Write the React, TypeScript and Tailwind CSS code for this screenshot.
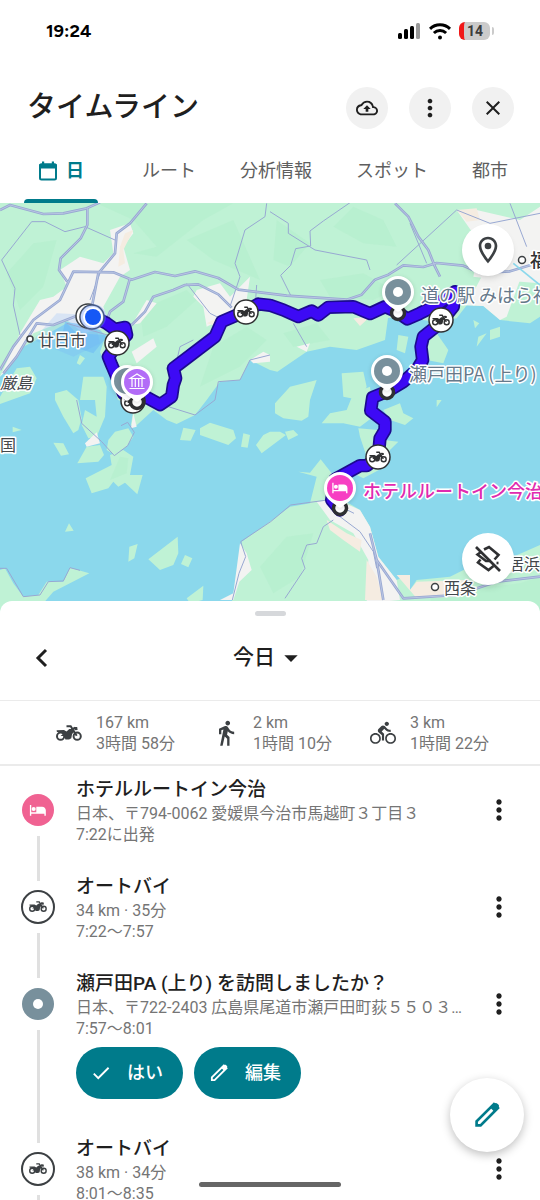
import type { ReactNode } from "react";
import {
  MdArrowDropDown,
  MdCheck,
  MdClose,
  MdDirectionsBike,
  MdDirectionsWalk,
  MdMoreVert,
  MdOutlineBackup,
  MdOutlineLocationOn,
} from "react-icons/md";

type IconProps = {
  className?: string;
};

function MotorcycleIcon({ className }: IconProps) {
  return (
    <svg viewBox="0 0 26 16" className={className} aria-hidden="true">
      <g fill="none" stroke="currentColor" strokeWidth="2">
        <circle cx="4.6" cy="11.2" r="3.6" />
        <circle cx="21.2" cy="11.2" r="3.6" />
        <path d="M10.5 1.2h4.2l6 9.6" />
        <path d="M15.6 4.6l3.6-1.9" />
      </g>
      <path
        fill="currentColor"
        d="M.6 5.2l7.4-.1 2.5 1.3 2.8-2.5h3l2.4 2.3-2.6 2.7-.8 4.3-2.2 1.2H9.4l-1.2-3.5L4.6 11l2.9-2.6L5 7.1.9 7zM18 1.9l3.2.2.4 2.8-3 .4z"
      />
    </svg>
  );
}

function EditIcon({ className }: IconProps) {
  return (
    <svg viewBox="0 0 24 24" className={className} aria-hidden="true">
      <path
        d="M4.2 19.8v-3L17.2 3.8l3 3-13 13z"
        fill="none"
        stroke="currentColor"
        strokeWidth="2"
      />
      <path d="M14.5 6.500l3-3c.7-.7 1.600-.7 2.300 0l.7.7c.7.7.7 1.600 0 2.300l-3 3z" fill="currentColor" />
    </svg>
  );
}

function BedIcon({ className }: IconProps) {
  return (
    <svg viewBox="0 0 20 14" fill="currentColor" className={className} aria-hidden="true">
      <path d="M1 1h1.5v8.2h5.6V3h6.4c2.4 0 4.2 1.8 4.2 4v6h-1.6v-2.2H2.5V13H1z" />
      <circle cx="5.2" cy="5.6" r="2.3" />
    </svg>
  );
}

function CalendarIcon({ className }: IconProps) {
  return (
    <svg viewBox="0 0 20 20" className={className} aria-hidden="true">
      <rect x="2" y="3.5" width="16" height="15" rx="1.5" fill="none" stroke="currentColor" strokeWidth="2" />
      <path d="M1 7.5v-3C1 3.2 1.8 2.400 3 2.400h1V.5h2.200v1.900h7.600V.5H16v1.900h1c1.200 0 2 .8 2 2.100v3z" fill="currentColor" />
    </svg>
  );
}

function LayersOffIcon({ className }: IconProps) {
  return (
    <svg
      viewBox="0 0 28 28"
      fill="none"
      stroke="currentColor"
      strokeWidth="2.600"
      className={className}
      aria-hidden="true"
    >
      <path d="M2 2l24 24" />
      <path d="M10 4.500L15 2l9.500 8-4 4.500" />
      <path d="M7 7L3.500 9.500 12 16h5" />
      <path d="M6.500 14.500L4 17.500l10.500 7.500 5-4" />
      <path d="M22.500 18h2" />
    </svg>
  );
}

function StatusBar() {
  return (
    <div className="flex h-[62px] shrink-0 items-center justify-between px-[46px] text-black">
      <span className="font-['Figtree','Open_Sans',sans-serif] text-lg font-bold">19:24</span>
      <div className="flex items-center gap-2">
        <svg width="24" height="18" viewBox="0 0 24 18" aria-hidden="true">
          <rect x="1" y="11" width="4" height="6" rx="1.5" />
          <rect x="7" y="7" width="4" height="10" rx="1.5" />
          <rect x="13" y="4" width="4" height="13" rx="1.5" />
          <rect x="19" y="1" width="4" height="16" rx="1.5" fill="#999" />
        </svg>
        <svg width="22" height="17" viewBox="0 0 22 17" fill="none" stroke="#000" strokeWidth="3" aria-hidden="true">
          <path d="M1 5.8a14.5 14.5 0 0 1 20 0" />
          <path d="M4.9 10a9 9 0 0 1 12.2 0" />
          <circle cx="11" cy="14.5" r="2" fill="#000" stroke="none" />
        </svg>
        <div className="flex items-center gap-0.5">
          <span className="flex h-[18px] w-[31px] items-center justify-center rounded-md border-l-[5px] border-[#f01818] bg-[#cbcbcb] pr-1 font-['Roboto',sans-serif] text-sm font-bold text-[#3c3c3c]">
            14
          </span>
          <span className="h-2 w-0.5 rounded-r bg-[#cbcbcb]" />
        </div>
      </div>
    </div>
  );
}

type RoundButtonProps = {
  label: string;
  children: ReactNode;
};

function RoundButton({ label, children }: RoundButtonProps) {
  return (
    <button
      aria-label={label}
      className="flex size-[42px] items-center justify-center rounded-full bg-[#f1f1f1] text-[#1f1f1f]"
    >
      {children}
    </button>
  );
}

const tabs = ["ルート", "分析情報", "スポット", "都市"];

function Header() {
  return (
    <header className="shrink-0">
      <div className="flex h-[92px] items-center justify-between pl-[27px] pr-[26px]">
        <h1 className="text-[29px] font-medium text-[#1f1f1f]">タイムライン</h1>
        <div className="flex gap-[21px]">
          <RoundButton label="バックアップ">
            <MdOutlineBackup className="size-[22px]" />
          </RoundButton>
          <RoundButton label="メニュー">
            <MdMoreVert className="size-7" />
          </RoundButton>
          <RoundButton label="閉じる">
            <MdClose className="size-6" />
          </RoundButton>
        </div>
      </div>
      <nav className="flex h-[49px] gap-11 overflow-hidden whitespace-nowrap pl-6 text-lg text-[#5e5e5e]">
        <button className="relative flex items-center gap-2 px-[14px] pb-4 font-bold text-[#007b8b]">
          <CalendarIcon className="size-5" />日
          <span className="absolute inset-x-0 bottom-0 h-1 rounded-t-sm bg-[#007b8b]" />
        </button>
        {tabs.map((tab) => (
          <button key={tab} className="pb-4">
            {tab}
          </button>
        ))}
      </nav>
    </header>
  );
}

// Terrain is digitised at three units per map pixel
const majorRoads = [
  "M0 30l30-15 100 27 60-2 70-15 40-18",
  "M262 25l0 50-20 40-60 60-5 35 25 35",
  "M0 510l40-70 60-80 80-60 40-85 120 2 55 22 70-23 60 12 60-14 70 20 60 35 145 18 180 12 45-15 40-45 40-15 45-28 60 5 40-12 80 8 50 22 90-5 60-18 90-30 110-15",
  "M440 10l-50 60-40 30-5 60-50 60-25 130",
  "M390 235l-20 70-40 30-15 40 30 25",
  "M10 520l40-50 60-100 50 5 90-35",
  "M395 375l40-40 25-45 60-20 35-15 40-2 60 30 40 40",
  "M1185 10l40 40 30 60 30 40 20 50 15 30",
  "M1110 1000l20 80 20 120M1130 1080l80 115 160-10 120-40 130-15",
];

const minorRoads = [
  "M5 180l40 85-5 50 20 90M5 180l90-115 40 0 60 30 60-15 90 40",
  "M800 10l-5 40-60 40-30 100 15 40-30 90",
  "M810 35l55 35 0 30 80 50 155 30 10 30",
  "M1050 8l-80 55-40 30 2 45-45 8-15 50-30 30 30 60",
  "M1190 195l180-165 100 40 150-30M1230 70l50 120M1530 10l50 130",
  "M270 300l30-80M200 370l140 40 50-20",
  "M525 505l15-65 40-20M560 250l70 90 60 30",
  "M880 370l40 70M770 255l-5 70",
  "M230 600l15 70 60 55 38 42 40-30 20-40-20-30-20 10",
  "M0 1105l20 0 50 85 50-5 25-40 45-2 20-40 30 8",
  "M505 620l80 25 60-45 10-55 65-5 30-60 60-15",
  "M697 1200l20-80 20-50-15-45 90-60 60-50 110-15 80 40",
  "M1000 960l-30 20-20 50-30 5-15 40 10 30-60 90",
  "M1020 950l60 45 40 60 10 50",
];

const land = [
  // mainland
  "M0 0H1620V350L1590 370 1500 360 1450 318 1400 316 1370 355 1300 365 1215 350 1164 354 1155 420 1070 450 990 440 920 455 832 515 810 510 750 480 720 540 660 545 620 600 585 645 530 672 500 660 460 630 405 680 393 675 402 615 354 600 330 525 300 456 318 405 230 400 200 370 110 420 70 440 50 470 20 500 0 530Z",
  "M165 600L165 580 200 570 235 600 245 655 235 690 220 700 190 650Z",
  "M240 600L250 530 310 530 320 560 318 600 315 650 290 710 265 715 245 675 255 630 290 650 285 600Z",
  "M325 720L345 695 385 685 400 710 380 740 345 765 320 750Z",
  "M232 790L260 740 300 735 312 765 295 785Z",
  "M330 765L370 750 400 770 390 825 428 825 412 883 375 848 355 860 340 845 325 865 275 880 257 835 335 795Z",
  "M160 728L190 730 207 763 183 767ZM38 680L65 690 38 697Z",
  "M550 683L587 690 572 722 540 720ZM600 685L630 668 700 690 708 715 685 735 600 705Z",
  "M730 700L750 705 743 743 723 740ZM768 735L790 705 810 695 840 695 858 705 785 760Z",
  "M195 995L207 970 221 992ZM388 1040L413 1032 403 1075 385 1085Z",
  "M445 1078L533 1010 535 1060 520 1095 480 1110ZM555 1065L577 1075 565 1102 543 1092Z",
  "M560 1195L610 1157 608 1200 570 1210Z",
  "M0 1110L15 1105 40 1150 70 1190 115 1185 140 1145 190 1145 210 1103 268 1120 160 1175 130 1210 0 1240Z",
  "M0 590L50 505 90 500 110 535 90 580 0 612ZM230 490L240 465 255 475 240 495Z",
  // Shikoku
  "M690 1240L700 1180 718 1110 725 1025 810 965 870 920 930 910 950 830 895 815 930 818 962 778 995 820 1030 900 1080 930 1110 980 1135 1070 1190 1140 1225 1125 1230 1170 1250 1140 1350 1130 1410 1100 1540 1070 1620 1035V1240Z",
  // Geiyo islands
  "M1075 685L1135 690 1150 720 1195 725 1170 750 1155 800 1090 835 1060 820 1100 770 1080 710Z",
  "M965 670L990 640 1040 630 1060 580 1110 560 1120 650 1080 680 1030 670Z",
  "M825 610L870 560 930 545 950 540 930 600 925 650 905 662 850 655 825 640Z",
  "M1150 630L1200 610 1210 640 1240 655 1215 675 1170 660ZM855 695L880 690 895 705 865 720Z",
  "M1195 405L1225 410 1215 460 1190 450ZM1025 520L1090 515 1100 560 1080 600 1030 590Z",
  "M1250 430L1310 400 1345 450 1330 490 1280 480ZM1420 360L1438 370 1425 385Z",
  "M1470 390L1500 380 1500 410 1470 420ZM1435 410L1460 400 1430 440ZM1310 600L1325 600 1310 622Z",
];

const hills = [
  "M290 10L400 60 470 140 400 160 470 170 610 60 700 10ZM560 120L640 180 780 240 700 60Z",
  "M20 220L100 130 170 120 130 260 60 330ZM420 330L560 270 590 300 500 380 430 410Z",
  "M1000 80L1060 20 1150 60 1190 140 1090 130ZM830 60L930 130 870 200 820 180Z",
  "M960 240L1090 220 1180 270 1120 300 990 290ZM850 400L950 370 990 420 880 440Z",
  "M640 440L740 380 800 420 720 500 600 560ZM860 1010L940 1000 900 1130 820 1180 780 1100Z",
  "M1290 1190L1400 1170 1560 1150 1620 1130V1240H1300ZM360 770L385 775 380 820 330 840Z",
];

const towns = [
  "M330 90L390 70 400 100 370 140 390 210 360 230 310 320 330 380 250 400 200 360 100 400 20 510 0 530 60 400 120 300 160 290 200 260 180 210 240 170 310 190 340 160Z",
  "M590 270L660 250 690 290 750 230 740 300 700 340 620 380 610 320 580 290Z",
  "M395 375L440 300 470 310 420 370ZM395 455L460 415 470 440 410 490Z",
  "M1370 30L1430 30 1560 60 1620 20V250L1500 240 1420 230 1440 130Z",
  "M1400 316L1450 220 1560 240 1520 350 1500 360 1450 318ZM255 730L290 697 300 730 260 740Z",
  "M950 905L1000 900 1035 910 1080 930 1110 980 1135 1070 1190 1140 1200 1200 1100 1210 1105 1080 1060 1000 990 960Z",
  "M720 1030L740 1060 755 1110 718 1145 700 1200 660 1200 700 1180ZM400 640L410 680 393 685ZM890 440L930 430 920 455Z",
  "M750 480L790 455 810 465 810 485 760 490Z",
];

const route =
  "M280 350L320 370 345 388 375 382 380 405 355 430 325 470 335 495 350 530 370 580 400 600 440 592 480 614 515 590 520 555 527 535 520 505 645 410 665 365 735 335 775 312 810 316 850 330 895 350 935 333 955 345 985 322 1060 320 1110 341 1155 320 1190 335 1222 357 1260 340 1310 315 1365 275 1360 320 1320 370 1270 410 1263 440 1268 480 1250 510 1210 545 1160 575 1118 592 1112 632 1155 665 1155 690 1140 715 1135 770 1100 797 1080 797 1005 838 995 900 1020 930";

type PinProps = {
  x: number;
  y: number;
  color: string;
  children?: ReactNode;
};

function Pin({ x, y, color, children }: PinProps) {
  return (
    <g transform={`translate(${x} ${y})`}>
      <path
        d="M-2 19C-5 15-16 12-16 0a16 16 0 0 1 32 0C16 12 5 15 2 19c-1 1-3 1-4 0z"
        fill="#fff"
        className="drop-shadow-sm"
      />
      <circle r="13" fill={color} />
      {children ?? <circle r="5" fill="#fff" />}
    </g>
  );
}

function Stop({ x, y }: { x: number; y: number }) {
  return <circle cx={x} cy={y} r="6.5" fill="#fff" stroke="#2f3032" strokeWidth="3.5" />;
}

const rides = [
  [117, 343],
  [246, 312],
  [133, 401],
  [441, 320],
  [378, 457],
];

function RouteMap() {
  return (
    <svg
      viewBox="0 203 540 410"
      preserveAspectRatio="xMidYMid slice"
      className="block h-full w-full bg-[#8bd8ec] font-['Noto_Sans_CJK_JP',sans-serif]"
    >
      <g transform="translate(0 200) scale(0.33333)">
        {land.map((d) => (
          <path key={d} d={d} fill="#bff2d5" />
        ))}
        {hills.map((d) => (
          <path key={d} d={d} fill="#b4eecd" opacity="0.6" />
        ))}
        {towns.map((d) => (
          <path key={d} d={d} fill="#f3f3f2" />
        ))}
        <path
          d="M375 100L400 90 370 150 375 190 355 200 360 140ZM620 370L680 340 660 380ZM980 960L1040 1000 1085 1020 1080 1055 1030 1020 990 990ZM1100 1080L1130 1130 1150 1200H1095ZM1190 1125L1230 1125V1170L1250 1145 1400 1140 1380 1190 1250 1195ZM1370 30L1430 25 1440 60 1400 65ZM1060 355L1110 350 1080 378Z"
          fill="#f5ece1"
        />
        <path d="M195 365l60 10 45 15 20 20-40 50-60-20-50 0 20-50z" fill="#6fbdf5" opacity="0.6" />
        <path d="M280 345L170 340 100 420 220 470 300 430Z" fill="#6fa8ff" opacity="0.2" />
        <g fill="none" stroke="#98a8d2" strokeLinejoin="round">
          {minorRoads.map((d) => (
            <path key={d} d={d} strokeWidth="3" />
          ))}
          {majorRoads.map((d) => (
            <path key={d} d={d} strokeWidth="8" />
          ))}
          {majorRoads.map((d) => (
            <path key={d} d={d} strokeWidth="3" stroke="#b9c5e3" />
          ))}
        </g>
        <path d="M1540 190l80 65" stroke="#8bd8ec" strokeWidth="5" />
        <g fill="none" strokeLinejoin="round" strokeLinecap="round">
          <path d={route} stroke="#1c0a8f" strokeWidth="40" />
          <path d={route} stroke="#3d0af5" strokeWidth="30" />
        </g>
      </g>

      <g fill="#fff" stroke="#3c4043" strokeWidth="1.5">
        <circle cx="30" cy="339" r="3" />
        <circle cx="522" cy="260" r="3.5" />
        <circle cx="435" cy="587" r="3.5" />
        <circle cx="88" cy="316" r="12" />
        <circle cx="92" cy="317" r="12" />
      </g>
      <circle cx="93" cy="317" r="13" fill="#5b8cff" opacity="0.35" />
      <circle cx="93" cy="317" r="10" fill="#fff" />
      <circle cx="93" cy="317" r="8" fill="#1558f5" />

      {rides.map(([x, y]) => (
        <g key={`${x}-${y}`} transform={`translate(${x} ${y})`} className="text-[#2f3032]">
          <circle r="12" fill="#fff" stroke="currentColor" strokeWidth="1.5" />
          <svg x="-9" y="-6" width="18" height="12">
            <MotorcycleIcon />
          </svg>
        </g>
      ))}

      <Stop x={137} y={402} />
      <Stop x={398} y={313} />
      <Stop x={387} y={392} />
      <Stop x={340} y={508} />
      <Pin x={127} y={381} color="#78909c" />
      <Pin x={137} y={382} color="#b26cf7">
        <path
          d="M-7-3.500L0-8l7 4.500zM-5-3v8M-1.700-3v8M1.700-3v8M5-3v8M-7.500 6.500h15"
          fill="none"
          stroke="#fff"
          strokeWidth="1.200"
        />
      </Pin>
      <Pin x={398} y={292} color="#78909c" />
      <Pin x={387} y={371} color="#78909c" />
      <Pin x={340} y={488} color="#f73fc3">
        <svg x="-9" y="-6" width="18" height="12" color="#fff">
          <BedIcon />
        </svg>
      </Pin>

      <g stroke="#fff" strokeWidth="3" strokeLinejoin="round" className="text-base [paint-order:stroke]">
        <g fill="#43474b">
          <text x="38" y="346">廿日市</text>
          <text x="0" y="389" className="italic">厳島</text>
          <text x="0" y="451">国</text>
          <text x="444" y="594">西条</text>
          <text x="508" y="570">居浜</text>
        </g>
        <g className="text-lg">
          <text x="530" y="267" fill="#2f3032" className="font-medium">福</text>
          <text x="421" y="302" fill="#66798a">道の駅 みはら神</text>
          <text x="409" y="381" fill="#66798a">瀬戸田PA (上り)</text>
          <text x="363" y="498" fill="#e02bb0" className="font-medium">ホテルルートイン今治</text>
        </g>
      </g>
    </svg>
  );
}

const stats = [
  { icon: <MotorcycleIcon className="w-[26px]" />, distance: "167 km", time: "3時間 58分" },
  { icon: <MdDirectionsWalk className="size-7" />, distance: "2 km", time: "1時間 10分" },
  { icon: <MdDirectionsBike className="size-[26px]" />, distance: "3 km", time: "1時間 22分" },
];

function Stats() {
  return (
    <ul className="flex h-[66px] items-center justify-center gap-[37px] border-b-2 border-t border-[#ebebeb] pl-1 text-base leading-[21px] text-[#757575]">
      {stats.map((stat) => (
        <li key={stat.distance} className="flex items-center gap-[13px]">
          <span className="flex w-7 justify-center text-[#3c4043]">{stat.icon}</span>
          <div>
            <p>{stat.distance}</p>
            <p>{stat.time}</p>
          </div>
        </li>
      ))}
    </ul>
  );
}

type Entry = {
  kind: "hotel" | "ride" | "place";
  title: string;
  detail: string;
  time: string;
  confirm?: boolean;
};

const entries: Entry[] = [
  {
    kind: "hotel",
    title: "ホテルルートイン今治",
    detail: "日本、〒794-0062 愛媛県今治市馬越町３丁目３",
    time: "7:22に出発",
  },
  { kind: "ride", title: "オートバイ", detail: "34 km · 35分", time: "7:22〜7:57" },
  {
    kind: "place",
    title: "瀬戸田PA (上り) を訪問しましたか？",
    detail: "日本、〒722-2403 広島県尾道市瀬戸田町荻５５０３…",
    time: "7:57〜8:01",
    confirm: true,
  },
  { kind: "ride", title: "オートバイ", detail: "38 km · 34分", time: "8:01〜8:35" },
];

function EntryIcon({ kind }: { kind: Entry["kind"] }) {
  if (kind === "hotel") {
    return (
      <span className="flex size-8 items-center justify-center rounded-full bg-[#f06292] text-white">
        <BedIcon className="w-[18px]" />
      </span>
    );
  }
  if (kind === "place") {
    return (
      <span className="flex size-8 items-center justify-center rounded-full bg-[#78909c]">
        <span className="size-[10px] rounded-full bg-white" />
      </span>
    );
  }
  return (
    <span className="flex size-[34px] items-center justify-center rounded-full border-2 border-[#3c4043] text-[#3c4043]">
      <MotorcycleIcon className="w-[18px]" />
    </span>
  );
}

function TimelineEntry({ entry }: { entry: Entry }) {
  return (
    <li className="flex pl-5 pr-[25px]">
      <div className="mr-5 flex w-9 flex-col items-center pt-4">
        <div className="flex h-9 items-center">
          <EntryIcon kind={entry.kind} />
        </div>
        <div className="-mb-2 mt-2 w-[3px] flex-1 bg-[#e0e0e0]" />
      </div>
      <div className="min-w-0 flex-1 pb-7 text-base leading-[21px] text-[#757575]">
        <h2 className="truncate text-[19px] font-medium leading-[27px] text-[#1f1f1f]">{entry.title}</h2>
        <p className="truncate">{entry.detail}</p>
        <p>{entry.time}</p>
        {entry.confirm && (
          <div className="mb-2 mt-2 flex gap-[11px] text-lg font-medium text-white">
            <button className="flex h-[52px] items-center gap-[15px] rounded-full bg-[#007b8b] pl-[14px] pr-5">
              <MdCheck className="size-[22px]" />
              はい
            </button>
            <button className="flex h-[52px] items-center gap-[15px] rounded-full bg-[#007b8b] pl-[14px] pr-5">
              <EditIcon className="size-[22px]" />
              編集
            </button>
          </div>
        )}
      </div>
      <button aria-label="その他" className="ml-[15px] mt-[18px] size-8 shrink-0 text-[#1f1f1f]">
        <MdMoreVert className="size-8" />
      </button>
    </li>
  );
}

export default function App() {
  return (
    <div
      lang="ja"
      className="relative flex h-screen flex-col overflow-hidden bg-white font-['Roboto','Noto_Sans_CJK_JP',sans-serif]"
    >
      <StatusBar />
      <Header />

      <div className="relative h-[410px] shrink-0">
        <RouteMap />
        <button
          aria-label="地点"
          className="absolute right-[26px] top-[21px] flex size-[52px] items-center justify-center rounded-full bg-white text-[#3c4043] shadow-md"
        >
          <MdOutlineLocationOn className="size-8" />
        </button>
        <button
          aria-label="レイヤ"
          className="absolute bottom-7 right-[26px] flex size-[52px] items-center justify-center rounded-full bg-white text-[#2f3032] shadow-md"
        >
          <LayersOffIcon className="size-7" />
        </button>
      </div>

      <main className="relative -mt-3 flex-1 rounded-t-xl bg-white">
        <div className="flex h-[15px] items-end justify-center">
          <span className="h-[5px] w-[31px] rounded-full bg-[#d6d8db]" />
        </div>
        <div className="grid h-[84px] grid-cols-[1fr_auto_1fr] items-center px-[33px]">
          <button aria-label="前の日" className="w-[18px] text-[#1f1f1f]">
            <svg viewBox="0 0 18 22" fill="none" stroke="currentColor" strokeWidth="3">
              <path d="M13 3l-8 8 8 8" />
            </svg>
          </button>
          <button className="flex items-center text-[21px] font-medium text-[#1f1f1f]">
            今日
            <MdArrowDropDown className="size-8" />
          </button>
        </div>
        <Stats />
        <ul className="pt-[10px]">
          {entries.map((entry) => (
            <TimelineEntry key={entry.time} entry={entry} />
          ))}
        </ul>
      </main>

      <button
        aria-label="編集"
        className="absolute bottom-12 right-4 flex size-[74px] items-center justify-center rounded-full bg-white text-[#007b8b] shadow-[0_3px_10px_rgba(0,0,0,0.25)]"
      >
        <EditIcon className="size-8" />
      </button>
      <div className="absolute bottom-[13px] left-1/2 h-[5px] w-[142px] -translate-x-1/2 rounded-full bg-[#666]" />
    </div>
  );
}
